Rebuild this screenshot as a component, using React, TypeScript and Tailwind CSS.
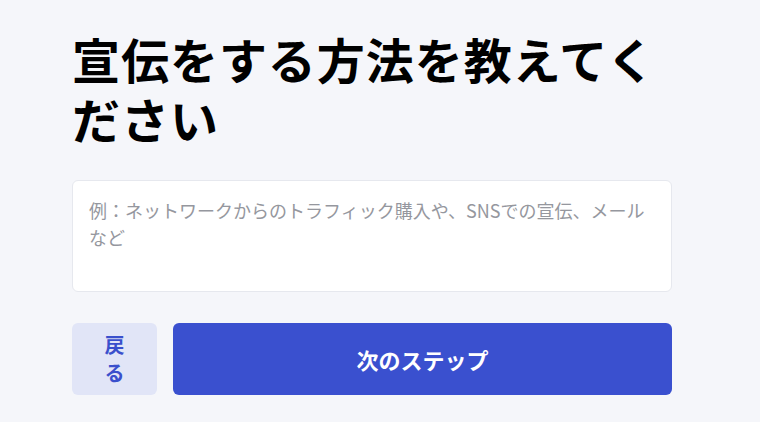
import React from "react";

export default function App() {
  return (
    <div
      className="min-h-[422px] w-full bg-[#f5f6fa] pl-[72px] pt-[28px]"
      style={{ fontFamily: '"Noto Sans CJK JP", "Noto Sans", sans-serif' }}
    >
      <div className="w-[600px]">
        <h1 className="text-[48px] font-bold leading-[60px] tracking-[0.02em] text-black">
          宣伝をする方法を教えてください
        </h1>
        <textarea
          className="mt-8 block h-[112px] w-full resize-none rounded-md border border-[#e6e8ee] bg-white px-4 py-4 text-[18px] leading-[27px] text-gray-800 placeholder:text-[#95979e] outline-none"
          placeholder="例：ネットワークからのトラフィック購入や、SNSでの宣伝、メールなど"
        />
        <div className="mt-[31px] flex gap-4">
          <button className="h-[72px] w-[85px] flex-none rounded-md bg-[#e1e5f7] px-6 py-2 text-[20px] font-bold leading-[28px] text-[#3a50cc]">
            戻る
          </button>
          <button className="h-[72px] flex-1 rounded-md bg-[#3a50cf] text-[22px] font-bold text-white">
            次のステップ
          </button>
        </div>
      </div>
    </div>
  );
}
